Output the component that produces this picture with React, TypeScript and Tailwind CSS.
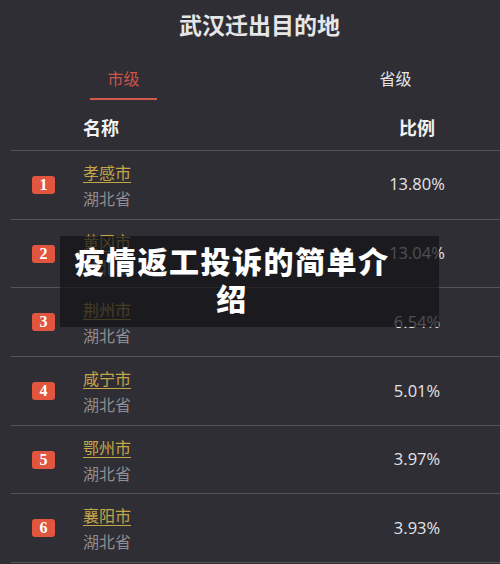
import React from 'react'

const rows = [
  { rank: 1, city: '孝感市', province: '湖北省', ratio: '13.80%' },
  { rank: 2, city: '黄冈市', province: '湖北省', ratio: '13.04%' },
  { rank: 3, city: '荆州市', province: '湖北省', ratio: '6.54%' },
  { rank: 4, city: '咸宁市', province: '湖北省', ratio: '5.01%' },
  { rank: 5, city: '鄂州市', province: '湖北省', ratio: '3.97%' },
  { rank: 6, city: '襄阳市', province: '湖北省', ratio: '3.93%' },
]

const cjk = { fontFamily: '"Noto Sans CJK SC", "Noto Sans", sans-serif' }

export default function App() {
  return (
    <main className="relative w-[500px] h-[564px] overflow-hidden bg-[#2f2e34]" style={cjk}>
      {/* title */}
      <div className="h-[48px] flex items-center justify-center pl-[19px] text-[23px] leading-none font-bold text-[#e6e6e8]">
        武汉迁出目的地
      </div>

      {/* tabs */}
      <div className="h-[52px] flex">
        <div className="ml-[90px] w-[67px] flex flex-col items-center pt-[18px]">
          <span className="text-[16px] leading-[24px] text-[#cc534b]">市级</span>
          <span className="mt-[8px] w-full h-[2px] bg-[#d2574d]" />
        </div>
        <div className="ml-[205px] w-[67px] flex flex-col items-center pt-[18px]">
          <span className="text-[16px] leading-[24px] text-[#e4e4e6]">省级</span>
        </div>
      </div>

      {/* table */}
      <div className="ml-[11px]">
        <div className="h-[51px] flex items-center pt-[4px] border-b border-[#55545b] text-[18px] font-bold text-[#f2f2f2]">
          <span className="ml-[72px] flex-1">名称</span>
          <span className="w-[100px] text-center mr-[33px]">比例</span>
        </div>

        {rows.map((r) => (
          <div key={r.rank} className="h-[68.7px] flex items-center border-b border-[#55545b]">
            <span
              className="ml-[21px] w-[23px] h-[18px] rounded-[3px] bg-[#e2553f] text-white text-[16px] leading-[18px] text-center font-bold"
              style={{ fontFamily: '"Liberation Serif", serif' }}
            >
              {r.rank}
            </span>
            <div className="ml-[28px] flex-1 flex flex-col text-[16px] leading-[26px]">
              <span className="self-start text-[#c5a647] underline underline-offset-[3px]">{r.city}</span>
              <span className="text-[#8e8d93]">{r.province}</span>
            </div>
            <span
              className="w-[100px] mr-[33px] text-center text-[16.5px] text-[#e4e4e6]"
              style={{ fontFamily: '"Open Sans", sans-serif' }}
            >
              {r.ratio}
            </span>
          </div>
        ))}
      </div>

      {/* overlay caption */}
      <div className="absolute left-[60px] top-[236px] w-[379px] h-[91px] bg-[rgba(20,19,23,0.72)] pt-[6px] pl-[7px]">
        <p className="w-[330px] text-center text-[30px] leading-[37px] font-black tracking-[1.5px] text-white">
          疫情返工投诉的简单介绍
        </p>
      </div>
    </main>
  )
}
